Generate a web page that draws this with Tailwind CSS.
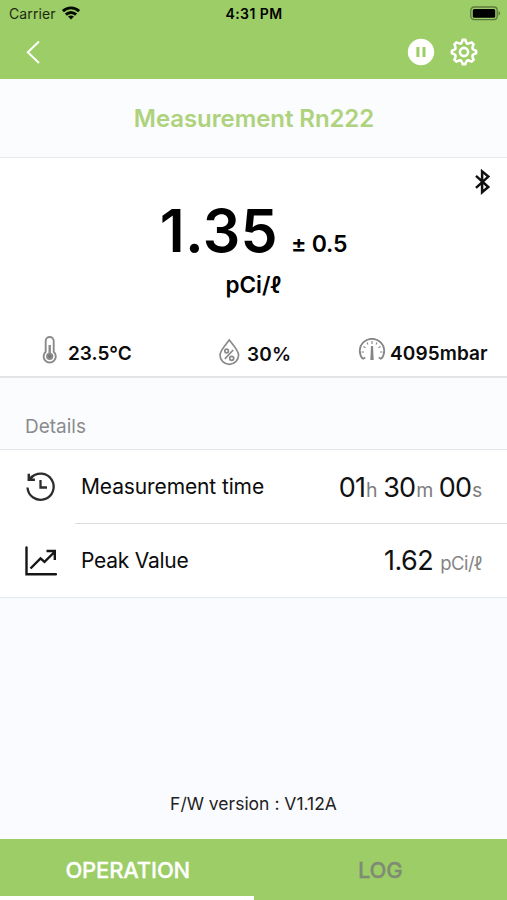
<!DOCTYPE html>
<html lang="en">
<head>
<meta charset="utf-8">
<title>Measurement Rn222</title>
<script src="https://cdn.jsdelivr.net/npm/@tailwindcss/browser@4"></script>
</head>
<body class="w-[507px] h-[900px] overflow-hidden bg-[#fafbfe] font-['Inter','DejaVu_Sans',sans-serif] text-[#0c0c0c] whitespace-nowrap">
<div class="flex flex-col h-[900px]">
  <header class="h-[79px] shrink-0 bg-[#9ccd66]">
    <div class="h-[27px] grid grid-cols-[1fr_auto_1fr] items-center pl-[9px] pr-[6px] text-black">
      <div class="flex items-center">
        <span class="w-[53px] text-[14px] tracking-[0.1px] text-[#1d2a10]">Carrier</span>
        <svg class="w-[18px] h-[14px] -mt-[1px]" viewBox="0 0 18 14" fill="none" stroke="#050a00" stroke-width="2.9"><path d="M.9 5.2C5.4.7 12.6.7 17.1 5.2"/><path d="M3.900 8.600c2.900-2.800 7.300-2.800 10.200 0"/><path d="M9 13.600 6 10.600c1.700-1.600 4.300-1.600 6 0z" fill="#050a00" stroke="none"/></svg>
      </div>
      <span class="text-[14px] font-semibold tracking-[0.45px] -ml-[2px]">4:31 PM</span>
      <svg class="justify-self-end w-[31px] h-[15px]" viewBox="0 0 31 15"><rect x=".8" y="1" width="26.4" height="12.6" rx="3.4" fill="#9ccd66" stroke="#5c793c" stroke-width="1.3"/><rect x="2.800" y="3" width="22.400" height="8.800" rx="1.500"/><path d="M28.500 5.300c2 .6 2 3.600 0 4.200z" fill="#5c793c"/></svg>
    </div>
    <div class="h-[51px] flex items-center pl-[25px] pr-[28px]">
      <svg class="w-[16px] h-[24px] -mt-[1px]" viewBox="0 0 16 24" fill="none" stroke="#fff" stroke-width="2"><path d="M14 1.500 2.800 12.300 14 23"/></svg>
      <svg class="ml-auto w-[28px] h-[28px] -mt-[1px]" viewBox="0 0 28 28"><circle cx="14" cy="14" r="13.200" fill="#fff"/><path d="M10.900 9v10M17 9v10" stroke="#9ccd66" stroke-width="3"/></svg>
      <svg class="ml-[14px] w-[30px] h-[30px] -mt-[1px]" viewBox="0 0 30 30" fill="none" stroke="#fff" stroke-width="2.600" stroke-linejoin="round"><circle cx="15" cy="15" r="4.100"/><path d="M13.600 2.900h2.800C17 4.500 17 5.900 18.300 6.500S21 6 22.600 5.400l2 2C24 9 22.900 10.400 23.500 11.700S25.500 13 27.100 13.600v2.800C25.500 17 24.100 17 23.500 18.300S24 21 24.600 22.600l-2 2C21 24 19.600 22.900 18.300 23.500S17 25.500 16.400 27.100h-2.800C13 25.500 13 24.100 11.700 23.500S9 24 7.400 24.600l-2-2C6 21 7.100 19.600 6.500 18.300S4.500 17 2.900 16.400v-2.800C4.500 13 5.900 13 6.500 11.700S6 9 5.400 7.400l2-2C9 6 10.400 7.100 11.700 6.500S13 4.500 13.600 2.900z"/></svg>
    </div>
  </header>

  <h1 class="h-[79px] shrink-0 flex items-center justify-center border-b border-[#e6ebf0] bg-[#fafcfe] pt-[1px] pl-[1px] text-[24px] tracking-[-0.08px] font-semibold text-[#afd27c]">Measurement Rn222</h1>

  <section class="h-[220px] shrink-0 bg-white border-b-2 border-[#e2e4e5] relative">
    <svg class="absolute left-[474px] top-[11px] w-[18px] h-[26px]" viewBox="0 0 18 26" fill="none" stroke="#111" stroke-width="2.500"><path d="M2 6.800 14.300 18 8.100 23.200V2.400l6.200 5.200L2 18.800"/></svg>
    <div class="h-[110px] pt-[36px] flex items-baseline justify-center text-black [font-feature-settings:'calt'_0]">
      <span class="text-[59px] leading-[74px] font-semibold tracking-[0.3px]">1.35</span>
      <span class="ml-[13px] text-[23px] leading-[30px] font-semibold tracking-[-0.2px]">± 0.5</span>
    </div>
    <div class="h-[32px] text-center text-[22.500px] leading-[34px] font-semibold text-black">pCi/ℓ</div>
    <div class="h-[76px] flex items-center pt-[32px] pl-[41px] text-[19px] font-semibold">
      <div class="w-[177px] flex items-center">
        <svg class="w-[17px] h-[28px] mr-[10px] -mt-[9px]" viewBox="0 0 17 28" fill="none" stroke="#8a8a8a" stroke-width="1.900"><path d="M4.700 15.800V5a4 4 0 0 1 8 0v10.800a6.100 6.100 0 1 1-8 0z"/><circle cx="8.700" cy="20.300" r="2.700" fill="#777"/><path d="M8.700 18V9" stroke-width="2.400"/></svg>
        <span>23.5°C</span>
      </div>
      <div class="w-[140px] flex items-center">
        <svg class="w-[22px] h-[28px] mr-[7px] -mt-[5px]" viewBox="0 0 22 28" fill="none" stroke="#8a8a8a" stroke-width="1.700"><path d="M11.300 2C8 6.500 2 12.700 2 17.100a9.300 9.300 0 0 0 18.600 0C20.600 12.700 14.600 6.500 11.300 2z"/><path d="m6.800 20.800 8.400-8.800"/><circle cx="8.600" cy="13" r="1.800"/><circle cx="13.700" cy="20.300" r="2"/></svg>
        <span class="mt-[2px] tracking-[0.2px]">30%</span>
      </div>
      <div class="flex items-center">
        <svg class="w-[28px] h-[24px] mr-[4px] -mt-[8px]" viewBox="0 0 28 24" fill="none" stroke="#858585" stroke-width="1.800"><path d="M4.800 21A12.200 12.200 0 1 1 23.200 21M4.800 21l2.400-1.500M23.200 21l-2.400-1.500"/><path d="M13 8h2l.7 14h-3.400z" fill="#858585" stroke="none"/><path d="M14 3v3M9 4.500l1 2M19 4.500l-1 2M5.500 8.500l2 1.200M22.500 8.500l-2 1.200M3.500 14h2.500M24.500 14H22" stroke-width="1.100"/></svg>
        <span class="tracking-[0.1px]">4095mbar</span>
      </div>
    </div>
  </section>

  <h2 class="h-[72px] shrink-0 border-b border-[#e3e7ea] bg-[#fafcfe] pl-[25px] pt-[35px] text-[19px] leading-[28px] text-[#8b8b8d]">Details</h2>

  <section class="h-[148px] shrink-0 bg-white border-b border-[#e6e9ec]">
    <div class="h-[74px] flex items-center pl-[25px]">
      <svg class="w-[32px] h-[32px] -mt-[1px]" viewBox="0 0 32 32" fill="none" stroke="#2c2c2c" stroke-width="2.300"><path d="M2.500 16.500a13.100 13.100 0 1 0 3.400-9.600"/><path d="M3.800 2.700v6.100h6.100M3.500 9.100 7.500 5.300" stroke-width="2.500"/><path d="M15.500 9v7.500H22"/></svg>
      <div class="ml-[18px] h-full flex-1 flex items-center border-b border-[#dcdde0] pl-[6px] pr-[25px]">
        <span class="text-[21px] tracking-[-0.12px]">Measurement time</span>
        <span class="ml-auto mt-[3px] flex items-baseline text-[27px] tracking-[-0.9px] text-[#111]">01<small class="ml-[1px] text-[19.500px] tracking-[-0.4px] text-[#7d7d7d]">h</small><span class="ml-[6px]">30</span><small class="ml-[1px] text-[19.500px] tracking-[-0.4px] text-[#7d7d7d]">m</small><span class="ml-[6px]">00</span><small class="ml-[1px] text-[19.500px] tracking-[-0.4px] text-[#7d7d7d]">s</small></span>
      </div>
    </div>
    <div class="h-[73px] flex items-center pl-[25px] pr-[25px]">
      <svg class="w-[32px] h-[30px]" viewBox="0 0 32 30" fill="none" stroke="#161616" stroke-width="2.400"><path d="M1.500 1.500v26.700H31" stroke-linecap="round"/><path d="M5.500 22.500 15.500 12.300l4 3.600L30 5.500M21.500 5H29.800v9"/></svg>
      <span class="ml-[24px] text-[21px] tracking-[-0.25px]">Peak Value</span>
      <span class="ml-auto mt-[2px] flex items-baseline text-[27px] tracking-[-0.5px] text-[#111]">1.62<small class="ml-[7px] text-[18.500px] tracking-[-0.500px] text-[#858585]">pCi/ℓ</small></span>
    </div>
  </section>

  <main class="flex-1 flex items-end justify-center pb-[23px]">
    <p class="text-[17.500px] leading-[24px] text-[#222] [font-feature-settings:'calt'_0]">F/W version : V1.12A</p>
  </main>

  <nav class="h-[61px] shrink-0 grid grid-cols-2 bg-[#9ccd66] text-[22px] font-medium tracking-[-0.15px] text-center leading-[62px]">
    <div class="h-[61px] border-b-4 border-white pl-[2px] text-white [-webkit-text-stroke:0.3px_white]">OPERATION</div>
    <div class="text-[#7f8b74] [-webkit-text-stroke:0.3px_#7f8b74]">LOG</div>
  </nav>
</div>
</body>
</html>
